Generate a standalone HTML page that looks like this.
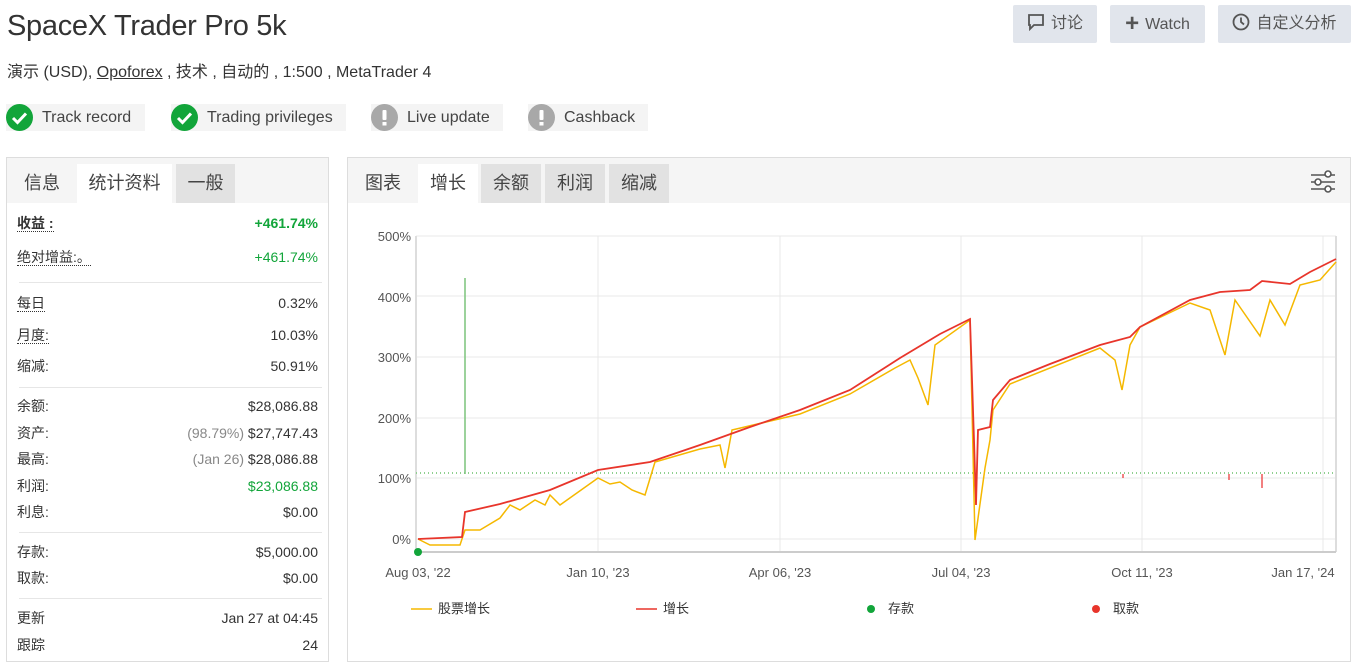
<!DOCTYPE html>
<html><head><meta charset="utf-8"><style>
*{box-sizing:border-box;margin:0;padding:0}
body{width:1358px;height:664px;background:#fff;font-family:"Liberation Sans","Noto Sans CJK SC",sans-serif;color:#333;position:relative;overflow:hidden}
.abs{position:absolute}
h1{position:absolute;left:7px;top:10px;font-size:29px;font-weight:normal;color:#333;letter-spacing:-0.3px}
.sub{left:7px;top:63px;font-size:16px;color:#333;line-height:20px}
.sub u{color:#333}
.badge{position:absolute;top:104px;height:27px;background:#f4f4f4;font-size:16px;line-height:27px;padding-left:36px;padding-right:12px;color:#444}
.badge i{position:absolute;left:0;top:0;width:27px;height:27px;border-radius:50%;font-style:normal}
.btn{position:absolute;top:5px;height:38px;background:#e1e5ec;border-radius:2px;font-size:16px;line-height:38px;color:#555;text-align:center}
.panel{position:absolute;border:1px solid #ddd;background:#fff}
.tabs{height:45px;background:#f5f5f5;position:relative}
.tab{position:absolute;top:6px;height:39px;line-height:39px;font-size:18px;text-align:center;color:#444}
.row{position:absolute;left:10px;right:10px;font-size:14px;color:#333;line-height:20px;height:20px}
.row span.l{border-bottom:1px dotted #333}
.row .r{position:absolute;right:0;top:0}
.sep{position:absolute;left:12px;right:6px;height:1px;background:#e6e6e6}
.g{color:#12a53a}
.gr{color:#888}
</style></head><body>
<h1>SpaceX Trader Pro 5k</h1>
<div class="abs sub">演示 (USD), <u>Opoforex</u> , 技术 , 自动的 , 1:500 , MetaTrader 4</div>

<div class="badge" style="left:6px;width:139px"><i style="background:#12a53a"><svg width="27" height="27"><path d="M7 14l4.5 4.5L20 9.5" stroke="#fff" stroke-width="3" fill="none"/></svg></i>Track record</div>
<div class="badge" style="left:171px;width:175px"><i style="background:#12a53a"><svg width="27" height="27"><path d="M7 14l4.5 4.5L20 9.5" stroke="#fff" stroke-width="3" fill="none"/></svg></i>Trading privileges</div>
<div class="badge" style="left:371px;width:132px"><i style="background:#a8a8a8"><svg width="27" height="27"><rect x="11.5" y="6" width="4" height="10" rx="1" fill="#fff"/><rect x="11.5" y="18" width="4" height="3.5" fill="#fff"/></svg></i>Live update</div>
<div class="badge" style="left:528px;width:120px"><i style="background:#a8a8a8"><svg width="27" height="27"><rect x="11.5" y="6" width="4" height="10" rx="1" fill="#fff"/><rect x="11.5" y="18" width="4" height="3.5" fill="#fff"/></svg></i>Cashback</div>

<div class="btn" style="left:1013px;width:84px"><svg width="18" height="18" style="vertical-align:-3px;margin-right:6px"><path d="M2 2h14v10H7l-4 4v-4H2z" fill="none" stroke="#555" stroke-width="1.8"/></svg>讨论</div>
<div class="btn" style="left:1110px;width:95px"><span style="font-size:24px;font-weight:bold;vertical-align:-2px;margin-right:6px">+</span>Watch</div>
<div class="btn" style="left:1218px;width:133px"><svg width="18" height="18" style="vertical-align:-3px;margin-right:6px"><circle cx="9" cy="9" r="7.5" fill="none" stroke="#555" stroke-width="1.8"/><path d="M9 4.5V9l3 2.5" fill="none" stroke="#555" stroke-width="1.8"/></svg>自定义分析</div>

<div class="panel" style="left:6px;top:157px;width:323px;height:505px">
 <div class="tabs">
  <div class="tab" style="left:0;width:70px">信息</div>
  <div class="tab" style="left:70px;width:95px;background:#fff">统计资料</div>
  <div class="tab" style="left:169px;width:59px;background:#e2e2e2">一般</div>
 </div>
 <div class="row" style="top:55px;font-weight:bold"><span class="l">收益 :</span><span class="r g">+461.74%</span></div>
 <div class="row" style="top:89px"><span class="l">绝对增益:。</span><span class="r g">+461.74%</span></div>
 <div class="sep" style="top:124px"></div>
 <div class="row" style="top:135px"><span class="l">每日</span><span class="r">0.32%</span></div>
 <div class="row" style="top:167px"><span class="l">月度:</span><span class="r">10.03%</span></div>
 <div class="row" style="top:198px"><span>缩减:</span><span class="r">50.91%</span></div>
 <div class="sep" style="top:229px"></div>
 <div class="row" style="top:238px"><span>余额:</span><span class="r">$28,086.88</span></div>
 <div class="row" style="top:265px"><span>资产:</span><span class="r"><span class="gr">(98.79%)</span> $27,747.43</span></div>
 <div class="row" style="top:291px"><span>最高:</span><span class="r"><span class="gr">(Jan 26)</span> $28,086.88</span></div>
 <div class="row" style="top:318px"><span>利润:</span><span class="r g">$23,086.88</span></div>
 <div class="row" style="top:344px"><span>利息:</span><span class="r">$0.00</span></div>
 <div class="sep" style="top:374px"></div>
 <div class="row" style="top:384px"><span>存款:</span><span class="r">$5,000.00</span></div>
 <div class="row" style="top:410px"><span>取款:</span><span class="r">$0.00</span></div>
 <div class="sep" style="top:440px"></div>
 <div class="row" style="top:450px"><span>更新</span><span class="r">Jan 27 at 04:45</span></div>
 <div class="row" style="top:477px"><span>跟踪</span><span class="r">24</span></div>
</div>

<div class="panel" style="left:347px;top:157px;width:1004px;height:505px">
 <div class="tabs">
  <div class="tab" style="left:0;width:70px">图表</div>
  <div class="tab" style="left:70px;width:60px;background:#fff">增长</div>
  <div class="tab" style="left:133px;width:60px;background:#e2e2e2">余额</div>
  <div class="tab" style="left:197px;width:60px;background:#e2e2e2">利润</div>
  <div class="tab" style="left:261px;width:60px;background:#e2e2e2">缩减</div>
  <svg class="abs" style="left:962px;top:12px" width="26" height="24"><g stroke="#555" stroke-width="1.6" fill="#fff"><line x1="1" y1="5" x2="25" y2="5"/><line x1="1" y1="12" x2="25" y2="12"/><line x1="1" y1="19" x2="25" y2="19"/><circle cx="18" cy="4" r="3"/><circle cx="8" cy="12" r="3"/><circle cx="18" cy="19" r="3"/></g></svg>
 </div>
</div>

<svg class="abs" style="left:0;top:0" width="1358" height="664">
 <g font-family="Liberation Sans,sans-serif" font-size="13" fill="#555" text-anchor="end">
  <text x="411" y="241">500%</text><text x="411" y="302">400%</text><text x="411" y="362">300%</text><text x="411" y="423">200%</text><text x="411" y="483">100%</text><text x="411" y="544">0%</text>
 </g>
 <g stroke="#e8e8e8" stroke-width="1">
  <line x1="416" y1="236" x2="1336" y2="236"/><line x1="416" y1="296" x2="1336" y2="296"/><line x1="416" y1="357" x2="1336" y2="357"/><line x1="416" y1="418" x2="1336" y2="418"/><line x1="416" y1="478" x2="1336" y2="478"/><line x1="416" y1="539" x2="1336" y2="539"/>
  <line x1="598" y1="236" x2="598" y2="552"/><line x1="780" y1="236" x2="780" y2="552"/><line x1="961" y1="236" x2="961" y2="552"/><line x1="1142" y1="236" x2="1142" y2="552"/><line x1="1323" y1="236" x2="1323" y2="552"/>
 </g>
 <line x1="416" y1="236" x2="416" y2="552" stroke="#ddd" stroke-width="2"/>
 <line x1="1336" y1="236" x2="1336" y2="552" stroke="#ddd" stroke-width="2"/>
 <line x1="416" y1="552" x2="1336" y2="552" stroke="#ccc" stroke-width="2"/>
 <line x1="416" y1="473" x2="1336" y2="473" stroke="#8fd08f" stroke-width="2" stroke-dasharray="1 3"/>
 <line x1="465" y1="278" x2="465" y2="474" stroke="#7cc47c" stroke-width="1.5"/>
 <g stroke="#e55" stroke-width="1.5"><line x1="1229" y1="474" x2="1229" y2="480"/><line x1="1262" y1="474" x2="1262" y2="488"/><line x1="1123" y1="474" x2="1123" y2="478"/></g>
 <polyline fill="none" stroke="#f5b800" stroke-width="1.5" points="418,539 430,545 460,545 465,530 480,530 500,518 510,505 520,510 535,500 545,505 550,495 560,505 598,478 610,484 620,482 632,490 645,495 655,462 700,449 720,445 725,468 732,430 800,414 850,394 895,368 910,360 918,378 928,405 935,345 970,320 975,540 985,468 990,440 993,410 1010,384 1100,348 1115,360 1122,390 1130,345 1140,327 1190,303 1210,310 1225,355 1235,300 1260,336 1270,300 1285,325 1300,285 1320,280 1336,262"/>
 <polyline fill="none" stroke="#e8352b" stroke-width="1.8" points="418,539 462,537 465,512 500,504 550,490 598,470 650,462 700,445 750,427 800,410 850,390 900,358 940,334 970,319 974,440 976,505 978,430 990,427 993,400 1010,380 1050,364 1100,345 1130,337 1140,327 1190,300 1220,292 1250,290 1262,281 1290,284 1310,272 1336,259"/>
 <circle cx="418" cy="552" r="4" fill="#12a53a"/>
 <g font-family="Liberation Sans,sans-serif" font-size="13" fill="#555" text-anchor="middle">
  <text x="418" y="577">Aug 03, '22</text><text x="598" y="577">Jan 10, '23</text><text x="780" y="577">Apr 06, '23</text><text x="961" y="577">Jul 04, '23</text><text x="1142" y="577">Oct 11, '23</text><text x="1303" y="577">Jan 17, '24</text>
 </g>
 <g font-family="Liberation Sans,Noto Sans CJK SC,sans-serif" font-size="13" fill="#333">
  <line x1="411" y1="609" x2="432" y2="609" stroke="#f5b800" stroke-width="1.5"/><text x="438" y="613">股票增长</text>
  <line x1="636" y1="609" x2="657" y2="609" stroke="#e8352b" stroke-width="1.5"/><text x="663" y="613">增长</text>
  <circle cx="871" cy="609" r="4" fill="#12a53a"/><text x="888" y="613">存款</text>
  <circle cx="1096" cy="609" r="4" fill="#e8352b"/><text x="1113" y="613">取款</text>
 </g>
</svg>
</body></html>
